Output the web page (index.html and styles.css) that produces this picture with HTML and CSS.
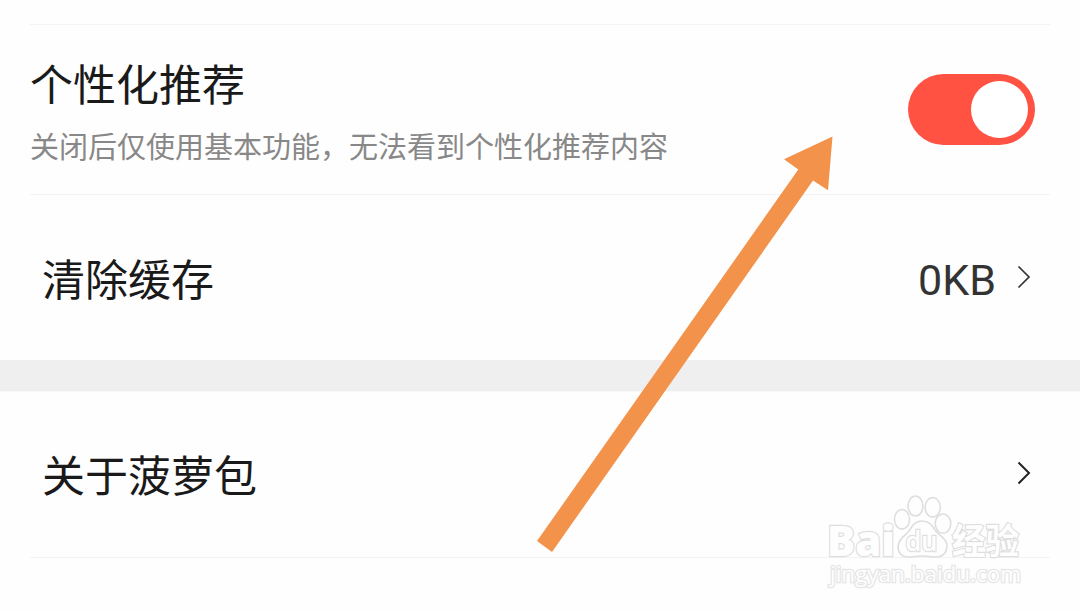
FILE: index.html
```html
<!DOCTYPE html>
<html lang="zh-CN">
<head>
    <meta charset="UTF-8">
    <title>设置</title>
    <link rel="stylesheet" href="styles.css">
</head>
<body>
    <div class="settings">
        <div class="row row-recommend">
            <div class="row-text">
                <div class="row-title">个性化推荐</div>
                <div class="row-desc">关闭后仅使用基本功能，无法看到个性化推荐内容</div>
            </div>
            <div class="switch"><span class="knob"></span></div>
        </div>

        <div class="row row-cache">
            <div class="row-title">清除缓存</div>
            <div class="row-value">0KB</div>
            <svg class="chevron chevron-thin" viewBox="0 0 16 26"><path d="M2.5 2.5L13 13L2.5 23.5"/></svg>
        </div>

        <div class="divider"></div>

        <div class="row row-about">
            <div class="row-title">关于菠萝包</div>
            <svg class="chevron" viewBox="0 0 16 26"><path d="M2.5 2.5L13 13L2.5 23.5"/></svg>
        </div>
    </div>

    <!-- Watermark -->
    <svg class="watermark" viewBox="820 485 220 110">
        <text class="mark" x="827" y="555.5" font-size="43" textLength="68" lengthAdjust="spacingAndGlyphs">Bai</text>
        <ellipse cx="902" cy="519.3" rx="7.6" ry="9.8"/>
        <ellipse cx="915.5" cy="506" rx="7.4" ry="10"/>
        <ellipse cx="932.7" cy="507.3" rx="7.6" ry="9.8"/>
        <ellipse cx="943" cy="523.6" rx="7.8" ry="9.6"/>
        <path d="M922 521C915 521 912 526 909 531C905 536 898 539 898 547C898 553 902 557 908 557C914 557 917 556 922 556C927 556 932 557 937 557C943 557 947 552 947 546C947 538 939 536 935 530C932 525 929 521 922 521Z"/>
        <text class="mark mark-du" x="905.5" y="550.5" font-size="27" textLength="32" lengthAdjust="spacingAndGlyphs">du</text>
        <text class="mark mark-cn" x="952" y="553.5" font-size="35" textLength="67" lengthAdjust="spacingAndGlyphs">经验</text>
        <text class="mark mark-url" x="830" y="581.5" font-size="22" textLength="191" lengthAdjust="spacingAndGlyphs">jingyan.baidu.com</text>
    </svg>

    <!-- Arrow pointing at the switch -->
    <svg class="arrow" viewBox="0 0 1080 611">
        <polygon points="832.5,136.5 784,159.3 798.3,169.5 537,541 552,552 813,180.5 828,190.3"/>
    </svg>
</body>
</html>
```

FILE: styles.css
```css
body {
    margin: 0;
    position: relative;
    height: 611px;
    overflow: hidden;
    background-color: #fefefe;
    font-family: "Noto Sans CJK SC", sans-serif;
    color: #1a1a1a;
}

.settings {
    padding-top: 24px;
}

.row {
    display: flex;
    align-items: center;
    box-sizing: border-box;
}

.row-recommend {
    height: 171px;
    margin: 0 30px;
    border-top: 1px solid #f3f3f3;
    border-bottom: 1px solid #f3f3f3;
}

.row-text {
    flex: 1;
    padding-bottom: 1px;
}

.row-title {
    flex: 1;
    font-size: 43px;
    line-height: 60px;
}

.row-desc {
    margin-top: 12px;
    font-size: 29px;
    line-height: 42px;
    color: #888;
    white-space: nowrap;
}

.switch {
    display: flex;
    justify-content: flex-end;
    box-sizing: border-box;
    width: 127px;
    height: 71px;
    padding: 7px;
    margin-right: 15px;
    border-radius: 36px;
    background-color: #ff5243;
}

.knob {
    width: 57px;
    height: 57px;
    border-radius: 50%;
    background-color: #fff;
}

.row-cache {
    height: 165px;
    padding: 0 48px 2px 42px;
}

.row-value {
    margin-right: 20px;
    padding-top: 7px;
    font-family: Roboto, sans-serif;
    font-size: 43px;
    color: #333;
}

.chevron {
    width: 16px;
    height: 26px;
    fill: none;
    stroke: #222;
    stroke-width: 2;
}

.chevron-thin {
    stroke: #333;
    stroke-width: 1.7;
}

.divider {
    height: 31px;
    border-bottom: 1px solid #f7f7f7;
    background-color: #efefef;
}

.row-about {
    height: 166px;
    margin: 0 30px;
    padding: 0 18px 3px 12px;
    border-bottom: 1px solid #f3f3f3;
}

.watermark {
    position: absolute;
    left: 820px;
    top: 485px;
    width: 220px;
    height: 110px;
    fill: #fefefe;
    stroke: #dedede;
    stroke-width: 1.6;
}

.mark {
    font-family: "Open Sans", sans-serif;
    font-weight: 800;
    paint-order: stroke;
    stroke-width: 2.4;
}

.mark-du {
    font-weight: 600;
}

.mark-cn {
    font-family: "Noto Sans CJK SC", sans-serif;
    font-weight: bold;
}

.mark-url {
    font-weight: 400;
    stroke: #e6e6e6;
    stroke-width: 2.6;
}

.arrow {
    position: absolute;
    left: 0;
    top: 0;
    width: 1080px;
    height: 611px;
    fill: #f3924a;
}
```
